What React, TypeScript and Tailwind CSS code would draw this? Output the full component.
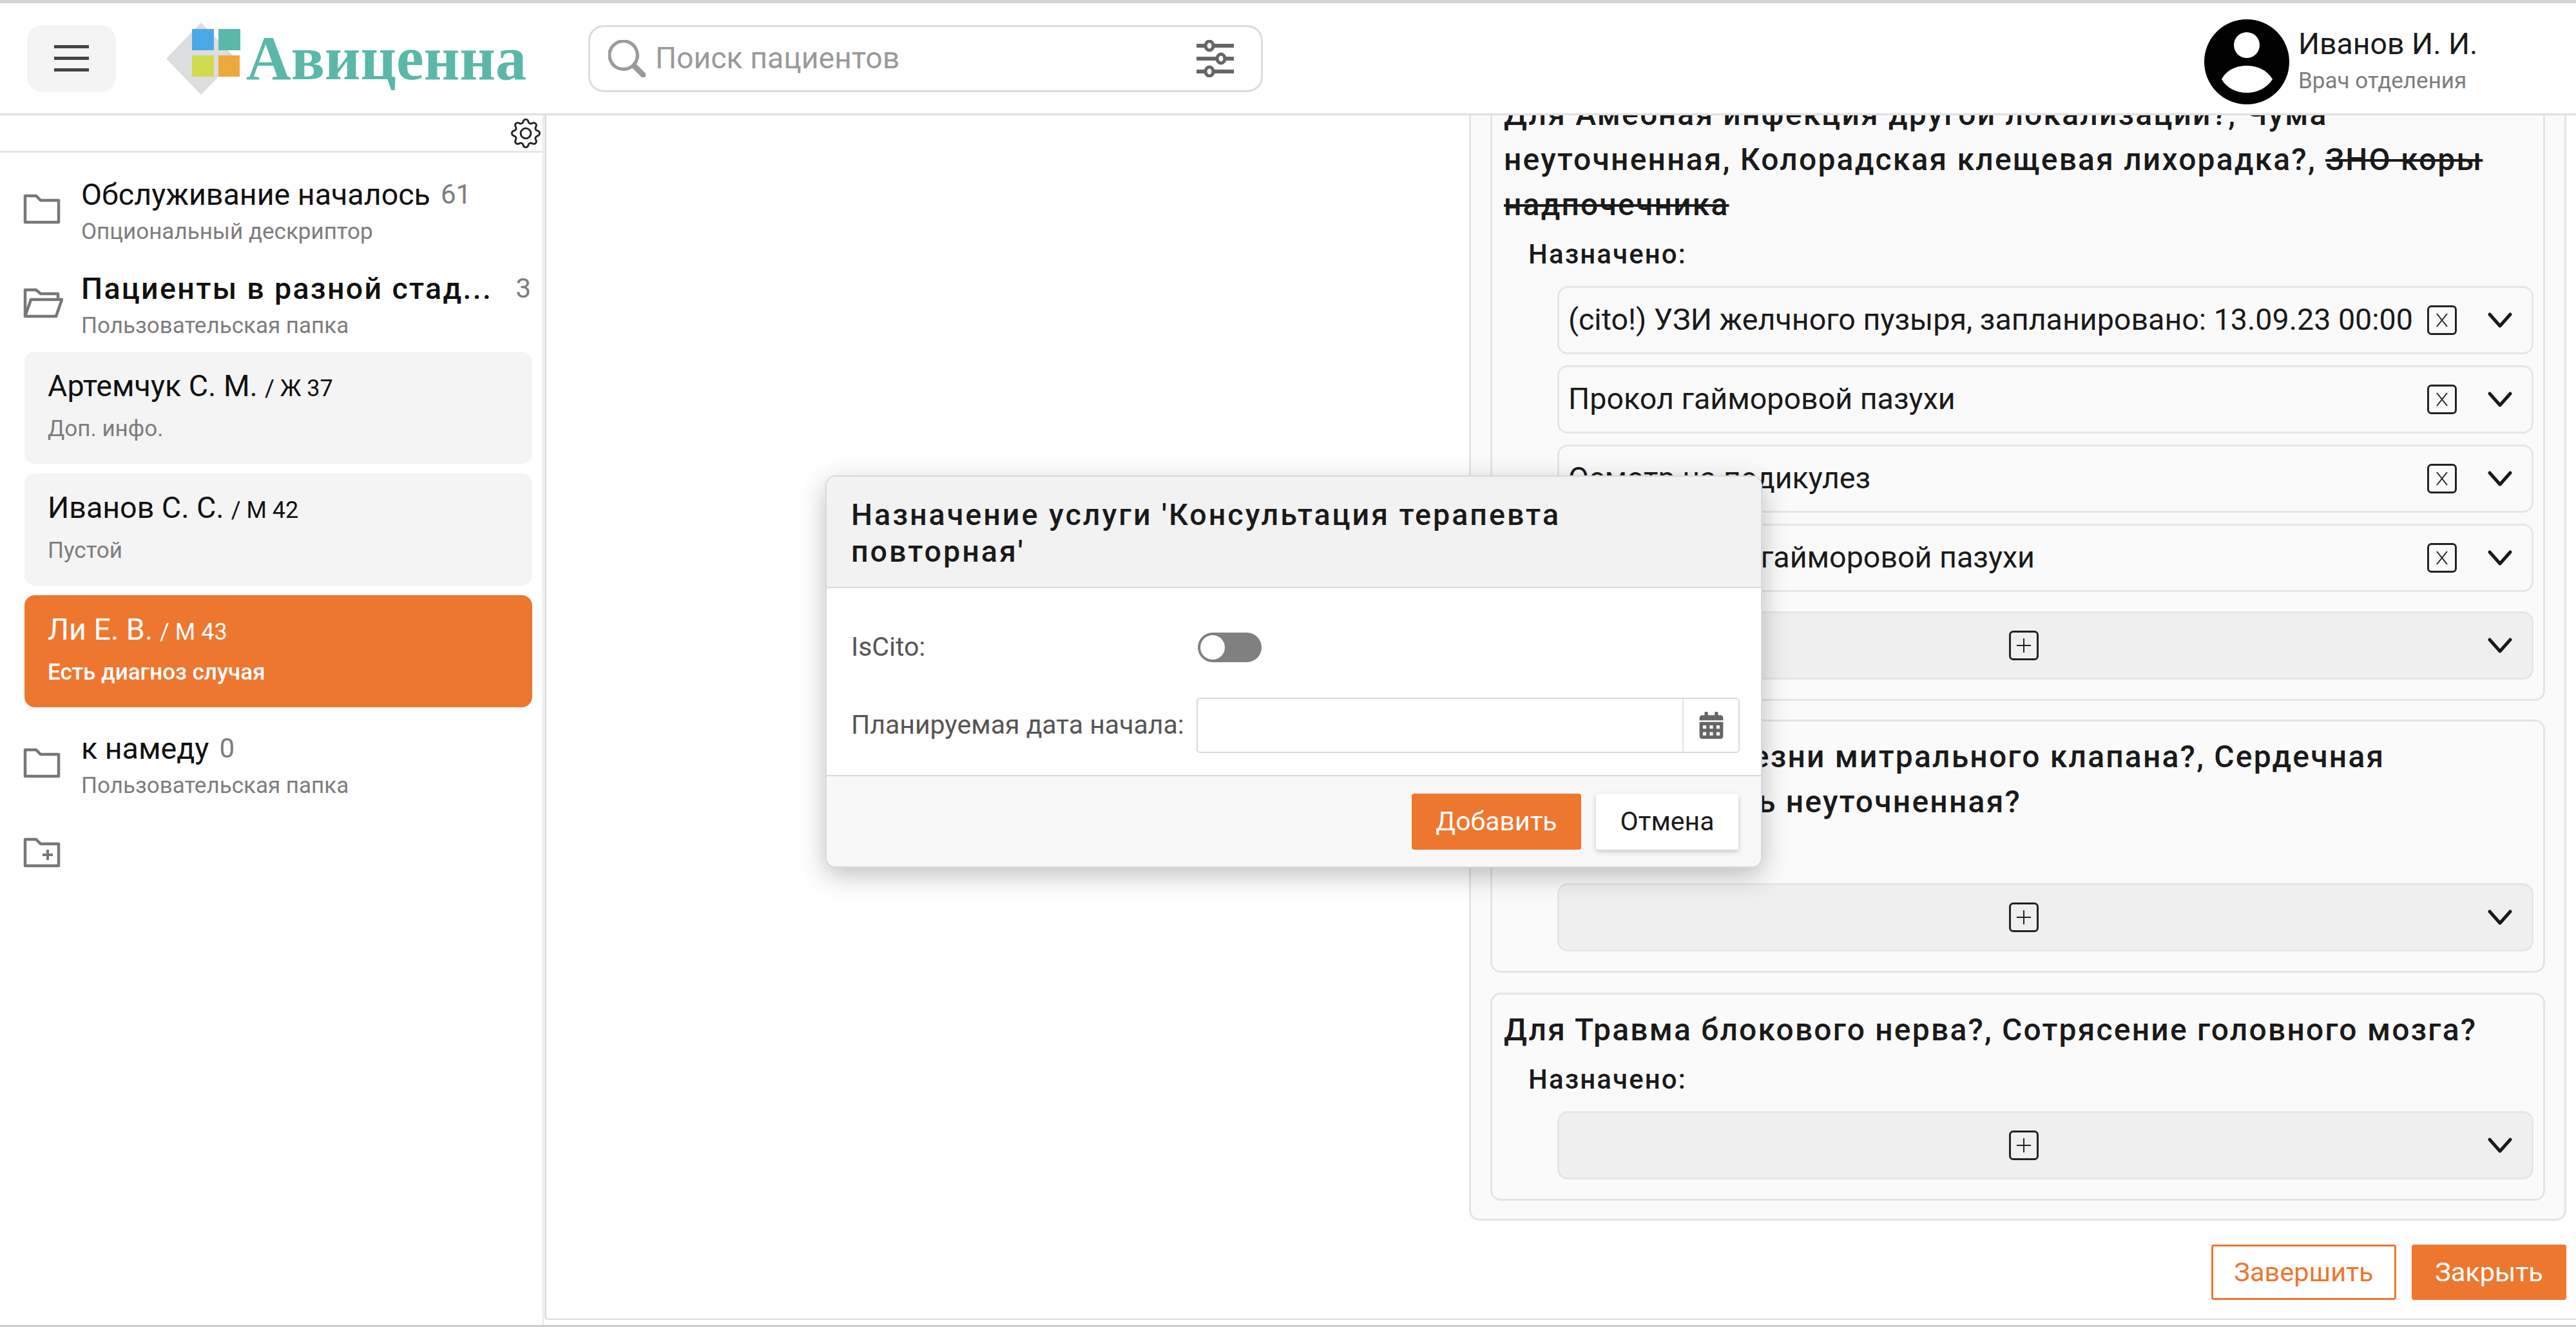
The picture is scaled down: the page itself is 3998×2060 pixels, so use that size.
import React from "react";
import { BsGear, BsSearch } from "react-icons/bs";
import { FaCalendarAlt } from "react-icons/fa";

function Chevron() {
  return (
    <svg viewBox="0 0 38 24" className="w-[38px] h-[24px] shrink-0" fill="none" stroke="#1a1a1a" strokeWidth="5" strokeLinecap="round" strokeLinejoin="round">
      <path d="M3 3 L19 21 L35 3" />
    </svg>
  );
}

function BoxX() {
  return (
    <svg viewBox="0 0 46 46" className="w-[46px] h-[46px] shrink-0" fill="none" stroke="#222">
      <rect x="1.5" y="1.5" width="43" height="43" rx="5" strokeWidth="3" />
      <path d="M15 13 L31 33 M31 13 L15 33" strokeWidth="2" />
    </svg>
  );
}

function BoxPlus() {
  return (
    <svg viewBox="0 0 46 46" className="w-[46px] h-[46px] shrink-0" fill="none" stroke="#222">
      <rect x="1.5" y="1.5" width="43" height="43" rx="5" strokeWidth="3" />
      <path d="M23 12 L23 34 M12 23 L34 23" strokeWidth="2" />
    </svg>
  );
}

function FolderClosed() {
  return (
    <svg viewBox="0 0 58 48" className="w-[58px] h-[48px]" fill="none" stroke="#777" strokeWidth="4.5" strokeLinejoin="round">
      <path d="M3 4 H20 L27 11 H55 V45 H3 Z" />
    </svg>
  );
}

function FolderOpen() {
  return (
    <svg viewBox="0 0 62 48" className="w-[62px] h-[48px]" fill="none" stroke="#777" strokeWidth="4.5" strokeLinejoin="round">
      <path d="M3 45 V4 H20 L27 10 H54 V18" />
      <path d="M12 19 H60 L51 45 H3 Z" />
    </svg>
  );
}

function FolderAdd() {
  return (
    <svg viewBox="0 0 58 48" className="w-[58px] h-[48px]" fill="none" stroke="#777" strokeWidth="4.5" strokeLinejoin="round">
      <path d="M3 4 H20 L27 11 H55 V45 H3 Z" />
      <path d="M38 20 V36 M30 28 H46" strokeWidth="4" />
    </svg>
  );
}

function SlidersIcon() {
  return (
    <svg viewBox="0 0 58 58" className="w-[58px] h-[58px] shrink-0" fill="#fff" stroke="#666" strokeWidth="5">
      <path d="M0 9 H58 M0 29 H58 M0 49 H58" strokeWidth="6" />
      <ellipse cx="20" cy="9" rx="6" ry="7" />
      <ellipse cx="38" cy="29" rx="6" ry="7" />
      <ellipse cx="20" cy="49" rx="6" ry="7" />
    </svg>
  );
}

function AvatarIcon() {
  return (
    <svg viewBox="0 0 132 132" className="w-[132px] h-[132px] shrink-0">
      <circle cx="66" cy="66" r="66" fill="#000" />
      <circle cx="66" cy="40" r="20" fill="#fff" />
      <path d="M27 93 C35 78 50 72 66 72 C82 72 97 78 106 93 C97 107 82 114 66 114 C50 114 35 107 27 93 Z" fill="#fff" />
    </svg>
  );
}

function Row({ text }: { text: string }) {
  return (
    <div className="h-[106px] flex items-center rounded-[16px] border-[3px] border-[#e6e6e6] bg-[#fafafa] pl-[14px] pr-[30px]">
      <div className="flex-1 text-[46.6px] text-[#1a1a1a] whitespace-nowrap">{text}</div>
      <BoxX />
      <div className="w-[48px]" />
      <Chevron />
    </div>
  );
}

function AddRow() {
  return (
    <div className="h-[106px] flex items-center rounded-[16px] border-[3px] border-[#e6e6e6] bg-[#efefef] pr-[30px]">
      <div className="flex-1 flex justify-center">
        <BoxPlus />
      </div>
      <Chevron />
    </div>
  );
}

function Section({ title, children }: { title: React.ReactNode; children: React.ReactNode }) {
  return (
    <div className="rounded-[16px] border-[3px] border-[#e4e4e4] bg-[#fafafa] pt-[20px] pb-[30px] pl-[18px] pr-[15px]">
      <div className="text-[48px] leading-[70px] font-medium tracking-[2.2px] text-[#1a1a1a]">{title}</div>
      <div className="mt-[17px] mb-[24px] ml-[38px] text-[42px] leading-[50px] font-medium tracking-[2.1px] text-[#1a1a1a]">Назначено:</div>
      <div className="ml-[83px] flex flex-col gap-[17px]">{children}</div>
    </div>
  );
}

function FolderRow({ icon, title, bold, count, desc, spread }: { icon: React.ReactNode; title: string; bold?: boolean; count: string; desc: string; spread?: boolean }) {
  return (
    <div className="flex items-center h-[112px]">
      <div className="w-[126px] pl-[36px] -mt-[14px] shrink-0">{icon}</div>
      <div className="flex-1 min-w-0 pr-[18px]">
        <div className={`flex items-center h-[56px] leading-[56px] text-[#111] whitespace-nowrap ${spread ? "justify-between" : "gap-[16px]"}`}>
          <span className={bold ? "text-[46.6px] font-medium tracking-[2.3px]" : "text-[46.6px]"}>{title}</span>
          <span className="text-[42px] text-[#7d7d7d]">{count}</span>
        </div>
        <div className="h-[56px] mt-[2px] text-[35px] leading-[56px] text-[#7d7d7d] whitespace-nowrap">{desc}</div>
      </div>
    </div>
  );
}

function Card({ name, meta, desc, active }: { name: string; meta: string; desc: string; active?: boolean }) {
  return (
    <div className={`h-[174px] rounded-[16px] pl-[36px] pt-[25px] ${active ? "bg-[#ee7730] text-white" : "bg-[#f4f4f4] text-[#111]"}`}>
      <div className="h-[56px] leading-[56px] whitespace-nowrap flex items-baseline gap-[11px]">
        <span className="text-[46.6px]">{name}</span>
        <span className="text-[36px]">{meta}</span>
      </div>
      <div className={`mt-[11px] h-[56px] leading-[56px] text-[35px] ${active ? "text-white font-medium" : "text-[#7d7d7d]"}`}>{desc}</div>
    </div>
  );
}

export default function App() {
  return (
    <div className="relative w-[3998px] h-[2060px] overflow-hidden bg-white flex flex-col font-['Roboto',sans-serif]">
      <div className="h-[5px] shrink-0 bg-[#d4d4d4]" />
      <header className="h-[174px] shrink-0 flex items-center border-b-[3px] border-[#e0e0e0] bg-white">
        <button className="ml-[42px] w-[138px] h-[104px] rounded-[24px] bg-[#f4f4f4] flex flex-col items-center justify-center gap-[13px]">
          <span className="block w-[54px] h-[5px] bg-[#444]" />
          <span className="block w-[54px] h-[5px] bg-[#444]" />
          <span className="block w-[54px] h-[5px] bg-[#444]" />
        </button>
        <div className="ml-[78px] flex items-center h-[112px] w-[557px] shrink-0">
          <svg viewBox="0 0 124 112" className="w-[124px] h-[112px] shrink-0">
            <polygon points="0,56 54,0 108,56 54,112" fill="#dcddde" />
            <rect x="40" y="10" width="34" height="33" fill="#4ba8e8" />
            <rect x="81" y="10" width="34" height="33" fill="#5bb8a8" />
            <rect x="40" y="51" width="34" height="33" fill="#cfdb4e" />
            <rect x="81" y="51" width="33" height="33" fill="#eda83e" />
          </svg>
          <span className="text-[96.5px] leading-[112px] font-bold text-[#5bb8a8] whitespace-nowrap font-['Liberation_Serif',serif]">Авиценна</span>
        </div>
        <div className="ml-[98px] w-[1047px] h-[104px] shrink-0 rounded-[24px] border-[3px] border-[#d8dce2] flex items-center pl-[28px] pr-[42px]">
          <BsSearch className="text-[#9a9a9a] text-[58px] shrink-0" stroke="currentColor" strokeWidth={0.4} />
          <span className="ml-[15px] flex-1 text-[46.4px] text-[#9a9a9a]">Поиск пациентов</span>
          <SlidersIcon />
        </div>
        <div className="ml-auto w-[577px] shrink-0 flex items-center gap-[14px] mt-[10px]">
          <AvatarIcon />
          <div className="flex flex-col">
            <div className="text-[46.4px] leading-[60px] text-[#1a1a1a]">Иванов И. И.</div>
            <div className="text-[35px] leading-[56px] text-[#7d7d7d]">Врач отделения</div>
          </div>
        </div>
      </header>
      <div className="flex-1 min-h-0 flex">
        <aside className="w-[844px] shrink-0 border-r-[2px] border-[#e8e8e8] flex flex-col">
          <div className="h-[58px] shrink-0 border-b-[3px] border-[#e6e6e6] flex items-center justify-end pr-[3px]">
            <BsGear className="text-[#222] text-[46px]" />
          </div>
          <div className="pt-[38px] flex flex-col">
            <FolderRow icon={<FolderClosed />} title="Обслуживание началось" count="61" desc="Опциональный дескриптор" />
            <div className="h-[34px]" />
            <FolderRow icon={<FolderOpen />} title="Пациенты в разной стад..." bold count="3" desc="Пользовательская папка" spread />
            <div className="mt-[13px] ml-[38px] mr-[16px] flex flex-col gap-[15px]">
              <Card name="Артемчук С. М." meta="/ Ж 37" desc="Доп. инфо." />
              <Card name="Иванов С. С." meta="/ М 42" desc="Пустой" />
              <Card name="Ли Е. В." meta="/ М 43" desc="Есть диагноз случая" active />
            </div>
            <div className="h-[37px]" />
            <FolderRow icon={<FolderClosed />} title="к намеду" count="0" desc="Пользовательская папка" />
            <div className="pl-[36px] mt-[52px]">
              <FolderAdd />
            </div>
          </div>
        </aside>
        <main className="flex-1 min-w-0 ml-[1px] flex flex-col border-l-[3px] border-b-[2px] border-[#dddddd] rounded-bl-[6px] mb-[8px]">
          <div className="h-[1716px] shrink-0 overflow-hidden flex flex-col justify-end pl-[1432px] pr-[15px]">
            <div className="shrink-0 rounded-[16px] border-[3px] border-[#e4e4e4] bg-[#fafafa] pl-[30px] pr-[30px] pb-[28px] flex flex-col gap-[29px]">
              <Section
                title={
                  <>
                    Для Амебная инфекция другой локализации?, Чума неуточненная, Колорадская клещевая лихорадка?, <span className="line-through">ЗНО коры надпочечника</span>
                  </>
                }
              >
                <Row text="(cito!) УЗИ желчного пузыря, запланировано: 13.09.23 00:00" />
                <Row text="Прокол гайморовой пазухи" />
                <Row text="Осмотр на педикулез" />
                <Row text="Промывание гайморовой пазухи" />
                <div className="mt-[13px]">
                  <AddRow />
                </div>
              </Section>
              <Section title="Для Другие болезни митрального клапана?, Сердечная недостаточность неуточненная?">
                <AddRow />
              </Section>
              <div className="mt-[2px]">
                <Section title="Для Травма блокового нерва?, Сотрясение головного мозга?">
                  <AddRow />
                </Section>
              </div>
            </div>
          </div>
          <div className="flex-1 flex justify-end items-start pt-[37px] pr-[15px] gap-[24px]">
            <button className="w-[287px] h-[86px] rounded-[4px] border-[3px] border-[#ee7730] text-[#ee7730] text-[41.5px] bg-white">Завершить</button>
            <button className="w-[240px] h-[86px] rounded-[4px] bg-[#ee7730] text-white text-[41.5px]">Закрыть</button>
          </div>
        </main>
      </div>
      <div className="h-[3px] shrink-0 bg-[#cccccc]" />

      <div className="absolute left-[1281px] top-[738px] w-[1454px] h-[609px] rounded-[16px] border-[2px] border-[#d5d9e0] bg-white overflow-hidden flex flex-col shadow-[0_12px_40px_rgba(0,0,0,0.25)]">
        <div className="h-[173px] shrink-0 bg-[#f2f2f2] border-b-[2px] border-[#d5d9e0] pl-[38px] pr-[260px] pt-[31px] text-[46.6px] leading-[57px] font-medium tracking-[3px] text-[#1a1a1a]">
          Назначение услуги 'Консультация терапевта повторная'
        </div>
        <div className="flex-1 relative flex flex-col pl-[38px] pr-[33px] pt-[68px]">
          <div className="flex items-center h-[48px]">
            <div className="w-[538px] shrink-0 text-[41px] text-[#555]">IsCito:</div>
            <div className="w-[99px] h-[46px] rounded-full bg-[#808080] flex items-center pl-[4px]">
              <div className="w-[38px] h-[38px] rounded-full bg-white" />
            </div>
          </div>
          <div className="flex items-center h-[86px] mt-[54px]">
            <div className="w-[536px] shrink-0 text-[41px] text-[#555] whitespace-nowrap">Планируемая дата начала:</div>
            <div className="w-[843px] shrink-0 h-[86px] rounded-[6px] border-[2px] border-[#d5d9e0] bg-white flex justify-end">
              <div className="w-[87px] border-l-[2px] border-[#e3e3e3] flex items-center justify-center">
                <FaCalendarAlt className="text-[#666] text-[42px]" />
              </div>
            </div>
          </div>
        </div>
        <div className="h-[142px] shrink-0 bg-[#f8f8f8] border-t-[2px] border-[#d5d9e0] flex justify-end items-start pt-[27px] pr-[35px] gap-[23px]">
          <button className="w-[263px] h-[87px] rounded-[4px] bg-[#ee7730] text-white text-[41px]">Добавить</button>
          <button className="w-[221px] h-[87px] rounded-[4px] bg-white text-[#1a1a1a] text-[41px] shadow-[0_3px_8px_rgba(0,0,0,0.2)]">Отмена</button>
        </div>
      </div>
    </div>
  );
}
